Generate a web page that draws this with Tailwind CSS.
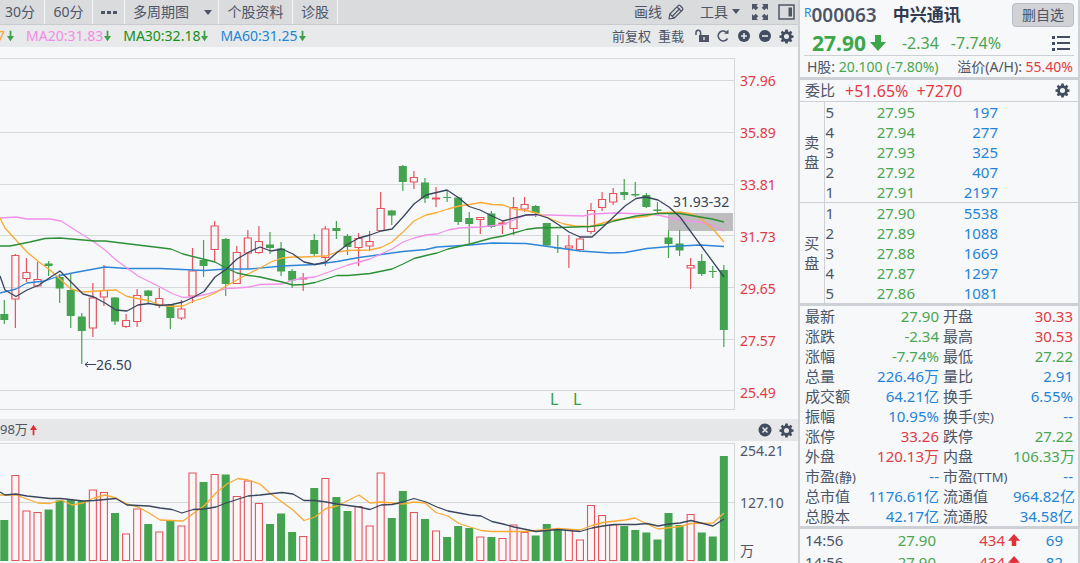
<!DOCTYPE html>
<html lang="zh-CN">
<head>
<meta charset="utf-8">
<title>中兴通讯 000063</title>
<script src="https://cdn.jsdelivr.net/npm/@tailwindcss/browser@4"></script>
</head>
<body class="flex h-screen overflow-hidden bg-[#f6f8fa] font-['Noto_Sans','Noto_Sans_CJK_SC',sans-serif] text-[#4d5566]">
<svg class="hidden" aria-hidden="true">
  <symbol id="down" viewBox="0 0 8 12"><path d="M3 0h2v6h3L4 12 0 6h3z"/></symbol>
  <symbol id="bigdown" viewBox="0 0 16 16"><path d="M5 0h6v7h5l-8 9-8-9h5z"/></symbol>
  <symbol id="gear" viewBox="0 0 16 16"><path fill-rule="evenodd" d="M6.700.6h2.600l.3 2 1.200.5 1.700-1.200 1.700 1.700-1.200 1.700.5 1.300 2 .3v2.400l-2 .3-.5 1.200 1.200 1.700-1.700 1.700-1.700-1.200-1.200.5-.3 2H6.700l-.3-2-1.200-.5-1.700 1.200-1.700-1.700L3 10.800l-.5-1.200-2-.3V6.900l2-.3.5-1.300-1.200-1.700 1.700-1.700 1.700 1.200 1.200-.5zM8 5.300a2.700 2.700 0 1 0 0 5.400 2.700 2.700 0 0 0 0-5.400z"/></symbol>
</svg>

<main class="flex min-w-0 flex-1 flex-col">
  <nav class="flex h-[25px] shrink-0 items-stretch justify-between border-b border-[#c9cbce] bg-[#dadbdd] text-[14px] leading-[22px]">
    <div class="flex">
      <button class="w-[45px] border-r border-[#f3f4f5] pr-1">30分</button>
      <button class="w-12 border-r border-[#f3f4f5]">60分</button>
      <button class="flex w-8 items-center justify-center border-r border-[#f3f4f5]" aria-label="更多"><svg class="h-[3px] w-4" viewBox="0 0 16 3" fill="currentColor"><path d="M0 0h4v3H0zM6 0h4v3H6zM12 0h4v3h-4z"/></svg></button>
      <button class="flex w-[94px] items-center justify-between border-r border-[#f3f4f5] pr-1.5 pl-2">多周期图<svg class="h-1.5 w-2" viewBox="0 0 8 6" fill="currentColor"><path d="M0 1h8L4 6z"/></svg></button>
      <button class="w-[74px] border-r border-[#f3f4f5]">个股资料</button>
      <button class="w-[45px] border-r border-[#f3f4f5]">诊股</button>
    </div>
    <div class="flex items-center pr-[3px]">
      <button class="flex items-center gap-1.5">画线
        <svg class="size-4" viewBox="0 0 16 16" fill="none" stroke="currentColor" stroke-width="1.200" stroke-linejoin="round"><path d="M1 15l.8-5L10 1.800Q11 .8 12 1.500l2.500 2.500q.8 1 0 2L6 14.200zM2 10l4 4M4.500 12l7.500-7.500M9 3l4 4"/></svg></button>
      <button class="ml-4 flex items-center gap-1">工具<svg class="h-1.5 w-2" viewBox="0 0 8 6" fill="currentColor"><path d="M0 0h8L4 5z"/></svg></button>
      <button class="ml-3" aria-label="全屏"><svg class="size-4" viewBox="0 0 16 16" fill="currentColor"><path d="M0 0h6L4.300 1.700l2 2-2.600 2.600-2-2L0 6zM16 0v6l-1.700-1.700-2 2-2.600-2.600 2-2L10 0zM0 16v-6l1.700 1.700 2-2 2.600 2.600-2 2L6 16zM16 16h-6l1.700-1.700-2-2 2.600-2.600 2 2L16 10z"/></svg></button>
      <button class="ml-2.5" aria-label="侧栏"><svg class="h-4 w-[17px]" viewBox="0 0 17 16"><path d="M1 1h15v14H1z" fill="none" stroke="currentColor" stroke-width="1.500"/><path d="M10.500 3.500H14v9h-3.500z" fill="currentColor"/></svg></button>
    </div>
  </nav>

  <div class="flex h-[22px] shrink-0 items-center justify-between bg-[#e7e9ea]">
    <div class="flex items-center gap-3 text-[14px] leading-5">
      <span class="flex w-[14px] items-center justify-end gap-[2px] overflow-hidden text-[#f5a72e]">7<svg class="h-3 w-[7px] shrink-0 fill-[#3fa04c]"><use href="#down"/></svg></span>
      <span class="flex items-center gap-px text-[#f48be6]">MA20:31.83<svg class="h-3 w-[7px] fill-[#3fa04c]"><use href="#down"/></svg></span>
      <span class="flex items-center gap-px text-[#169016]">MA30:32.18<svg class="h-3 w-[7px] fill-[#3fa04c]"><use href="#down"/></svg></span>
      <span class="flex items-center gap-px text-[#2484d6]">MA60:31.25<svg class="h-3 w-[7px] fill-[#3fa04c]"><use href="#down"/></svg></span>
    </div>
    <div class="flex items-center gap-[7px] pr-1 text-[13px] leading-5">
      <button>前复权</button>
      <button>重载</button>
      <button class="ml-1" aria-label="解锁"><svg class="size-[14px]" viewBox="0 0 14 14"><path d="M1 6V3.500a2.300 2.300 0 0 1 4.600 0V6" fill="none" stroke="currentColor" stroke-width="1.500"/><path fill="currentColor" fill-rule="evenodd" d="M4 6h10v7H4zM8.300 8v3h1.400V8z"/></svg></button>
      <button aria-label="刷新"><svg class="size-[14px]" viewBox="0 0 14 14"><path d="M11.500 9.500A5 5 0 1 1 10 2.800" fill="none" stroke="currentColor" stroke-width="1.500"/><path d="M8 4.500L12.500 5V.5z" fill="currentColor"/></svg></button>
      <button aria-label="放大"><svg class="size-[14px]" viewBox="0 0 14 14"><circle cx="7" cy="7" r="6" fill="#434d60"/><path d="M4 7h6M7 4v6" stroke="#e7e9ea" stroke-width="1.600"/></svg></button>
      <button aria-label="缩小"><svg class="size-[14px]" viewBox="0 0 14 14"><circle cx="7" cy="7" r="6" fill="#434d60"/><path d="M4 7h6" stroke="#e7e9ea" stroke-width="1.600"/></svg></button>
      <button aria-label="设置"><svg class="size-[15px] fill-[#434d60]"><use href="#gear"/></svg></button>
    </div>
  </div>

  <section class="flex h-[372px] shrink-0" aria-label="K线图">
    <svg id="kline" class="h-full min-w-0 flex-1" viewBox="0 47 736 372" preserveAspectRatio="xMaxYMin slice" fill="none"></svg>
    <div class="flex w-[62px] flex-col gap-8 pt-6 pl-1 text-[14px] leading-5 text-[#e23b45]">
      <span>37.96</span><span>35.89</span><span>33.81</span><span>31.73</span><span>29.65</span><span>27.57</span><span>25.49</span>
    </div>
  </section>

  <div class="flex h-[22px] shrink-0 items-center justify-between bg-[#e5e7e8] pr-1">
    <span class="flex items-center gap-[2px] text-[13px]">98万<svg class="h-3 w-[7px] rotate-180 fill-[#e32f37]"><use href="#down"/></svg></span>
    <div class="flex items-center gap-[7px]">
      <button aria-label="关闭"><svg class="size-[14px]" viewBox="0 0 14 14"><circle cx="7" cy="7" r="6.500" fill="#434d60"/><path d="M4.500 4.500l5 5M9.500 4.500l-5 5" stroke="#e7e9ea" stroke-width="1.500"/></svg></button>
      <button aria-label="指标设置"><svg class="size-[15px] fill-[#434d60]"><use href="#gear"/></svg></button>
    </div>
  </div>

  <section class="flex h-[122px] shrink-0" aria-label="成交量">
    <svg id="volume" class="h-full min-w-0 flex-1" viewBox="0 441 736 122" preserveAspectRatio="xMaxYMin slice" fill="none"></svg>
    <div class="flex w-[62px] flex-col pl-1 text-[14px] leading-5">
      <span>254.21</span><span class="mt-8">127.10</span><span class="mt-7">万</span>
    </div>
  </section>
</main>

<aside class="flex w-[282px] shrink-0 flex-col border-x-2 border-[#cdd0d4] text-[15px]">
  <header class="flex shrink-0 flex-col px-1">
    <div class="flex h-[30px] items-center justify-between">
      <h1 class="flex items-center">
        <span class="self-start text-[12px] leading-6 text-[#2484d6]">R</span>
        <span class="text-[19px] leading-7 font-semibold">000063</span>
        <span class="ml-4 text-[17px] font-bold text-[#303a50]">中兴通讯</span>
      </h1>
      <button class="h-6 w-[62px] rounded-sm border border-[#b9bcc1] bg-[#d0d2d5] text-[14px] leading-5">删自选</button>
    </div>
    <div class="flex h-[25px] items-center justify-between pl-2">
      <div class="flex items-center text-[#4aa651]">
        <span class="text-[21px] leading-6 font-bold text-[#3da648]">27.90</span>
        <svg class="ml-1 size-4 fill-[#3da648]"><use href="#bigdown"/></svg>
        <span class="ml-4 text-[16px]">-2.34</span>
        <span class="ml-3 text-[16px]">-7.74%</span>
      </div>
      <button class="mr-1" aria-label="菜单"><svg class="h-4 w-[18px]" viewBox="0 0 18 16" fill="#434d60"><path d="M0 1h3v3H0zM5 1h13v2H5zM0 7h3v3H0zM5 7h13v2H5zM0 13h3v3H0zM5 13h13v2H5z"/></svg></button>
    </div>
    <div class="flex h-[22px] items-center justify-between border-t border-[#cdd0d4] pr-px pl-[3px] text-[14px] leading-5">
      <span>H股: <span class="text-[#4aa651]">20.100 (-7.80%)</span></span>
      <span>溢价(A/H): <span class="text-[#e23b45]">55.40%</span></span>
    </div>
  </header>

  <section class="flex h-[25px] shrink-0 items-center border-t-3 border-b border-[#cdd0d4] px-[5px]">
    <span>委比</span>
    <span class="ml-2.5 text-[16px] text-[#e23b45]">+51.65%</span>
    <span class="ml-2 text-[16px] text-[#e23b45]">+7270</span>
    <button class="mr-[3px] ml-auto" aria-label="盘口设置"><svg class="size-[15px] fill-[#434d60]"><use href="#gear"/></svg></button>
  </section>

  <table class="w-full table-fixed border-collapse leading-5">
    <colgroup><col class="w-6"><col class="w-5"><col class="w-[71px]"><col class="w-[83px]"><col></colgroup>
    <tbody class="text-right text-[#2484d6]">
      <tr class="h-5"><th rowspan="5" class="border-r border-[#cdd0d4] text-center font-normal text-[#4d5566]">卖<br>盘</th><th class="pl-px text-left font-normal text-[#4d5566]">5</th><td class="text-[#4aa651]">27.95</td><td>197</td></tr>
      <tr class="h-5"><th class="pl-px text-left font-normal text-[#4d5566]">4</th><td class="text-[#4aa651]">27.94</td><td>277</td></tr>
      <tr class="h-5"><th class="pl-px text-left font-normal text-[#4d5566]">3</th><td class="text-[#4aa651]">27.93</td><td>325</td></tr>
      <tr class="h-5"><th class="pl-px text-left font-normal text-[#4d5566]">2</th><td class="text-[#4aa651]">27.92</td><td>407</td></tr>
      <tr class="h-5"><th class="pl-px text-left font-normal text-[#4d5566]">1</th><td class="text-[#4aa651]">27.91</td><td>2197</td></tr>
    </tbody>
    <tbody class="border-t border-[#cdd0d4] text-right text-[#2484d6]">
      <tr class="h-5"><th rowspan="5" class="border-r border-[#cdd0d4] text-center font-normal text-[#4d5566]">买<br>盘</th><th class="pl-px text-left font-normal text-[#4d5566]">1</th><td class="text-[#4aa651]">27.90</td><td>5538</td></tr>
      <tr class="h-5"><th class="pl-px text-left font-normal text-[#4d5566]">2</th><td class="text-[#4aa651]">27.89</td><td>1088</td></tr>
      <tr class="h-5"><th class="pl-px text-left font-normal text-[#4d5566]">3</th><td class="text-[#4aa651]">27.88</td><td>1669</td></tr>
      <tr class="h-5"><th class="pl-px text-left font-normal text-[#4d5566]">4</th><td class="text-[#4aa651]">27.87</td><td>1297</td></tr>
      <tr class="h-5"><th class="pl-px text-left font-normal text-[#4d5566]">5</th><td class="text-[#4aa651]">27.86</td><td>1081</td></tr>
    </tbody>
  </table>

  <div class="shrink-0 border-t-3 border-b-3 border-[#cdd0d4] px-[5px]">
    <table class="w-full table-fixed border-collapse leading-5 whitespace-nowrap">
      <colgroup><col class="w-[59px]"><col class="w-[75px]"><col class="w-[74px]"><col></colgroup>
      <tbody class="text-right text-[#2484d6] [&_small]:text-[13px] [&_small]:leading-none [&_th]:text-left [&_th]:font-normal [&_th]:text-[#4d5566] [&_tr>th:nth-child(3)]:pl-1">
        <tr class="h-5"><th>最新</th><td class="text-[#4aa651]">27.90</td><th>开盘</th><td class="text-[#e23b45]">30.33</td></tr>
        <tr class="h-5"><th>涨跌</th><td class="text-[#4aa651]">-2.34</td><th>最高</th><td class="text-[#e23b45]">30.53</td></tr>
        <tr class="h-5"><th>涨幅</th><td class="text-[#4aa651]">-7.74%</td><th>最低</th><td class="text-[#4aa651]">27.22</td></tr>
        <tr class="h-5"><th>总量</th><td>226.46万</td><th>量比</th><td>2.91</td></tr>
        <tr class="h-5"><th>成交额</th><td>64.21亿</td><th>换手</th><td>6.55%</td></tr>
        <tr class="h-5"><th>振幅</th><td>10.95%</td><th>换手<small>(实)</small></th><td>--</td></tr>
        <tr class="h-5"><th>涨停</th><td class="text-[#e23b45]">33.26</td><th>跌停</th><td class="text-[#4aa651]">27.22</td></tr>
        <tr class="h-5"><th>外盘</th><td class="text-[#e23b45]">120.13万</td><th>内盘</th><td class="text-[#4aa651]">106.33万</td></tr>
        <tr class="h-5"><th>市盈<small>(静)</small></th><td>--</td><th>市盈<small>(TTM)</small></th><td>--</td></tr>
        <tr class="h-5"><th>总市值</th><td>1176.61亿</td><th>流通值</th><td>964.82亿</td></tr>
        <tr class="h-5"><th>总股本</th><td>42.17亿</th><th>流通股</th><td>34.58亿</td></tr>
      </tbody>
    </table>
  </div>

  <table class="ml-[5px] w-[258px] table-fixed border-collapse text-right leading-[22px]">
    <colgroup><col class="w-[50px]"><col class="w-[81px]"><col class="w-[84px]"><col></colgroup>
    <tbody>
      <tr class="h-[22px]"><td class="text-left">14:56</td><td class="text-[#4aa651]">27.90</td><td class="text-[#e23b45]"><span class="flex items-center justify-end gap-[3px]">434<svg class="h-[14px] w-3 rotate-180 fill-[#e32f37]"><use href="#bigdown"/></svg></span></td><td class="text-[#2484d6]">69</td></tr>
      <tr class="h-[22px]"><td class="text-left">14:56</td><td class="text-[#4aa651]">27.90</td><td class="text-[#e23b45]"><span class="flex items-center justify-end gap-[3px]">434<svg class="h-[14px] w-3 rotate-180 fill-[#e32f37]"><use href="#bigdown"/></svg></span></td><td class="text-[#2484d6]">82</td></tr>
    </tbody>
  </table>
</aside>

<script>
// Each candle: colour, high, body top, body bottom, low, volume top
const candles = `g 300 314 320 324 520|r 254 255.5 299 328 475.5|r 258 272.5 278.5 282 511|r 262 279.5 286 287 512.5|g 261 263.5 266 276 509.5|g 274 277 288.5 303 500.5|g 273 290 316 328 500|g 313 316.5 331 364 501|r 283 298 328 337 490|r 265 290.5 297 306 492.5|g 297 297.5 321.5 325 513|r 314 320.5 326.5 328 534|r 289 295.5 321.5 327 509|g 290 290.5 296 303 524|r 288 298.5 305 308 532|g 304 305 318 329 521|r 300 309 318 320 526|r 248 271 296 303 473|g 240 260 266 277 482|r 221 226 249.5 262 474.5|g 238 239 284 296 474.5|r 246 252.5 283.5 284 496.5|r 230 238 253 269 481|r 226 241.5 252.5 254 503.5|g 232 244.5 248 254 524|g 242 248.5 271.5 276 513.5|g 269 271 280.5 288 532|r 273 278 279 291 536.5|g 234 240 254 256 488|r 226 229 257.5 266 478.5|g 221 228 231 239 497|g 234 236 247 255 511|r 233 238.5 247.5 266 506.5|r 231 241.5 246 251 526|r 192 208.5 230.5 231 473|g 210 210.5 215.5 225 518|g 165 166 182 191 491|r 171 177.5 182 189 512.5|g 178 182.5 198.5 203 519|r 187 198 199 207 531|g 190 197 198 202 537|g 197 197.5 222 225 526|g 212 218 224 244 528|r 217 217.5 219.5 234 537|g 211 213.5 227 228 537|r 221 223 224 234 538.5|r 197 207.5 228.5 235 525|r 197 204.5 209 212 532.5|g 205 206 213 217 535.5|g 223 223 245.5 247 524|g 235 247.5 248.5 253 530|r 235 246 248 268 530.5|r 236 239 249.5 251 540|r 203 210.5 231.5 234 505.5|r 192 199.5 207.5 211 515.5|r 188 193.5 202 205 525|g 179 192 195 200 526|g 182 194 195.5 197 530|g 193 195 207 208 532.5|g 202 209.5 211 214 539.5|g 230 237.5 244 258 513|g 230 243.5 250.5 256 525|r 258 265.5 268 289 514.5|g 254 261 274 276 532.5|g 266 271 272 278 536.5|g 265 270 330 347 456`.split('|').map(s => s.split(' '));
const GREEN = '#44a34f', RED = '#e5545c';
const hLine = y => `<path d="M-2000 ${y}H735" stroke="#d6d9dc"/>`;
const poly = (pts, c) => `<polyline points="${pts}" stroke="${c}" stroke-width="1.3" stroke-linejoin="round"/>`;

let k = [58.5, 80.5, 132.5, 184.5, 235.5, 287.5, 339.5, 390.5, 409.5].map(hLine).join('') +
  '<path d="M734.5 58V410" stroke="#d6d9dc"/>';
let v = hLine(443.5) + hLine(502.5) + '<path d="M734.5 443V561" stroke="#d6d9dc"/>';
candles.forEach(([c, hi, top, bot, lo, vol], i) => {
  const x = 4.3 + 11.07 * i, h = bot - top;
  if (c === 'g') {
    k += `<path d="M${x} ${hi}V${lo}" stroke="${GREEN}" stroke-width="1.2"/><path d="M${x - 4} ${top}h8v${h}h-8z" fill="${GREEN}"/>`;
    v += `<path d="M${x - 4} ${vol}h8V561h-8z" fill="${GREEN}"/>`;
  } else {
    k += `<path d="M${x} ${hi}V${top}M${x} ${bot}V${lo}M${x - 3.5} ${top}h7v${h}h-7z" stroke="${RED}" stroke-width="1.2"/>`;
    v += `<path d="M${x - 3.5} ${vol}h7V560.5h-7z" fill="#fdf5f6" stroke="${RED}" stroke-width="1.1"/>`;
  }
});
k += '<path d="M668 213h65v18h-65z" fill="#999" fill-opacity=".62"/>';
k += poly('0,293 16,289 27,283 45,281 60,275.5 75,272.5 105,267 127,268.5 160,268.5 205,270.5 226,269 250,269 282,266 315,264.5 337,261.5 359,257.5 381,254.5 403,251.5 426,249.5 437,247 470,245 492,243 526,243.5 548,246.5 580,251 610,253 625,252.5 647,248.5 670,246.5 700,245 724,246.5', '#2e86d8');
k += poly('0,218 16,217 27,219 50,219 61,221 83,235 94,242 105,250 116,260 138,276 160,287 172,293.5 183,297.5 194,297 205,294.5 226,288.5 237,288 249,287 260,284.5 282,284 293,280 304,278 315,277 337,269 348,265 359,262 370,259 381,254 392,249 403,242 414,238 426,235 437,234 448,230 459,228 481,227 503,224.5 514,220 526,215 548,215 583,216 592,214 614,213 647,214 658,215 680,220 700,222 712,225 724,231', '#f191ea');
k += poly('0,218 5,228 16,240 27,252 39,262 50,270 60,279 71,289 82,292 105,290.5 116,290 127,296.5 150,301 160,305 172,306.5 183,306 194,301 205,297.5 215,293 226,286 237,280 248,274 260,268 271,262 282,258 293,257 304,257 326,256 337,252 348,250.5 370,250 381,247.5 392,242 403,232 414,221 426,215 437,212.5 448,209 459,206 470,204.5 481,202.5 492,204.5 503,205 514,209 526,210.5 537,213 553,220 564,224 575,226 590,226.5 603,223 614,220 625,218.5 636,217.5 648,216 658,213 680,212 692,214 700,218 712,228 724,242', '#f9ab35');
k += poly('0,246 10,246 30,242 45,238.5 60,238 95,241 105,241 138,245 171,249 183,254 215,262 226,268 237,273 249,275.5 260,277 282,282 293,285 304,284.5 315,282.5 337,275.5 348,275.5 370,273.5 392,269 403,264 414,258.5 426,255.5 437,253 448,249 470,244 492,238 503,236 514,233 526,229.5 537,228 560,227.5 590,226.5 603,225 614,221 636,216 658,213.5 680,213.5 700,217 712,219 724,222', '#2c8f35');
k += poly('0,276 5,290 16,296.5 27,290 39,285 50,277.5 60,271 83,294 94,297 105,303 116,310 127,311 138,305 149,303.5 160,305.5 172,304.5 183,302 194,297 204,291.5 215,277 226,269.5 237,259 249,252 260,247 271,251 282,249 293,254 304,262 315,264.5 326,262 337,252.5 348,244 359,238 370,235 381,231 392,229 403,217 414,204 426,195 447,190 459,198 469,206.5 480,210 492,216 503,221 526,215 537,214.5 548,218 559,225 569,232 580,237 592,237 603,227 614,216.5 625,206 636,198.5 646,197 658,200 669,207 680,217 724,277', '#3a465e');
k += `<g fill="#3a4356" font-size="14"><text x="673" y="207">31.93-32</text><text x="96" y="370">26.50</text></g><path d="M96 364.500H85M88 362l-3 2.500 3 2.500" stroke="#3a4356"/>`;
k += '<g fill="#33a044" font-size="16"><text x="550" y="405">L</text><text x="573" y="405">L</text></g>';
v += poly('0,495 16,495 27,499 38,503 50,503.5 61,500 72,505 83,503 94,498 105,495 116,498 127,504 138,507 149,513 160,520 183,521 194,513 205,505 216,493 227,484 238,478.5 248,480 260,484 271,494 282,502 293,510 304,520.5 315,517 326,508.5 337,506 348,500.5 359,495 370,503 381,502 403,504 414,502 425,503 436,512.5 448,516 459,523.5 481,530.5 492,531.5 525,531.5 558,528.5 580,530 592,525.5 603,522.5 625,520 635,518 647,524 658,529 680,526.5 691,523.5 713,523 724,513', '#f9ab35');
v += poly('0,492 5,495 16,494 27,496 50,498.5 61,498.5 83,501 94,500.5 116,498.5 127,505 149,506 160,508 172,509.5 182,513 193,509.5 204,509 216,507 226,503 248,496 260,495 282,492.5 293,494 304,500.5 315,500.5 326,502 337,504 359,507 370,509.5 381,505 392,504.5 403,502 414,498.5 426,502 437,507 448,511 470,515 481,516 492,521.5 503,524 514,527 536,531.5 558,529.5 580,531.5 592,528 603,526 614,524.5 636,524.5 647,523.5 658,526 669,524 680,523 691,520.5 713,526 724,519', '#3a465e');
document.getElementById('kline').innerHTML = k;
document.getElementById('volume').innerHTML = v;
</script>
</body>
</html>
